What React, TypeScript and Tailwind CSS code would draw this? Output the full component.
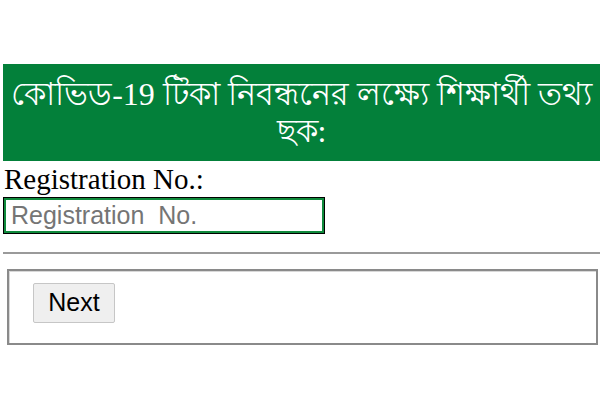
export default function App() {
  return (
    <div className="w-[600px] h-[400px] bg-white overflow-hidden pt-[64px] font-['Liberation_Serif',serif]">
      <div className="ml-[3px] bg-[#03803a] h-[97px] flex items-center justify-center px-1">
        <h1 className="text-white text-[32px] leading-[37px] text-center font-normal">
          কোভিড-19 টিকা নিবন্ধনের লক্ষ্যে শিক্ষার্থী তথ্য ছক:
        </h1>
      </div>
      <label className="block ml-[4px] mt-[2px] text-[29px] leading-[32px] text-black">
        Registration No.:
      </label>
      <input
        placeholder="Registration  No."
        className="block ml-[3px] mt-[2px] w-[322px] h-[37px] border border-black shadow-[inset_0_0_0_2px_#0f8a3c] px-[7px] text-[25px] font-['Liberation_Sans',sans-serif] placeholder:text-[#757575] outline-none"
      />
      <hr className="ml-[3px] mt-[18px] border-0 border-t-2 border-[#9a9a9a]" />
      <fieldset className="ml-[7px] mr-[2px] mt-[15px] h-[76px] border-2 border-[#8a8a8a] shadow-[inset_1px_1px_0_#d8d8d8] flex items-start pt-[12px] px-[24px]">
        <button className="w-[82px] h-[40px] bg-[#efefef] border border-[#c6c6c6] rounded-[2px] text-[25px] font-['Liberation_Sans',sans-serif] text-black">
          Next
        </button>
      </fieldset>
    </div>
  );
}
